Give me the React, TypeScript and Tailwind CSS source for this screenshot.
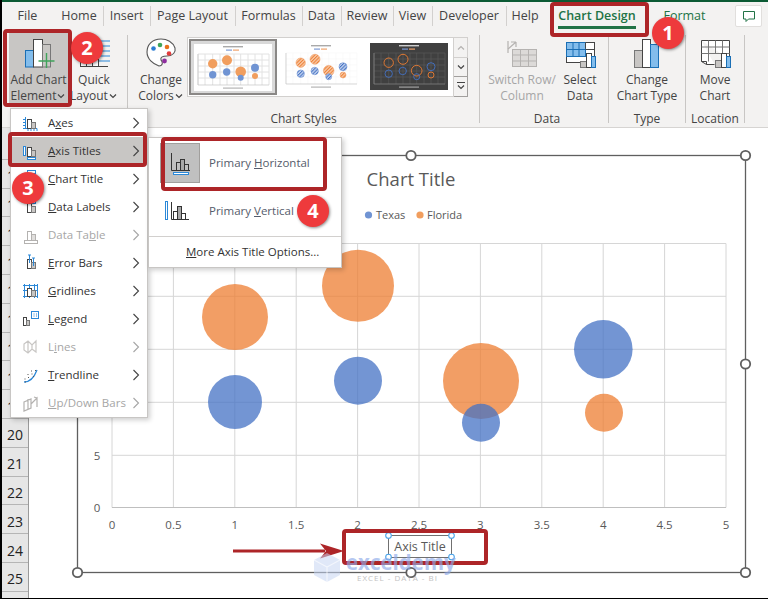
import React from "react";

const RED = "#ad2528";

const tabs = [
  { label: "File", cls: "w-[19px] mr-[25px]" },
  { label: "Home", cls: "w-[34px]", sep: true },
  { label: "Insert", cls: "w-[33px]", sep: true },
  { label: "Page Layout", cls: "w-[71px]", sep: true },
  { label: "Formulas", cls: "w-[53px]", sep: true },
  { label: "Data", cls: "w-[25px]", sep: true },
  { label: "Review", cls: "w-[38px]", sep: true },
  { label: "View", cls: "w-[25px]", sep: true },
  { label: "Developer", cls: "w-[60px]", sep: true },
  { label: "Help", cls: "w-[24px]" },
];

const bubbles = [
  { cx: 235, cy: 317, r: 33, c: "#ed7d31" },
  { cx: 358, cy: 285.7, r: 36, c: "#ed7d31" },
  { cx: 481, cy: 381, r: 38, c: "#ed7d31" },
  { cx: 604, cy: 412.7, r: 19, c: "#ed7d31" },
  { cx: 235, cy: 402, r: 27, c: "#4472c4" },
  { cx: 358, cy: 380.7, r: 24, c: "#4472c4" },
  { cx: 481, cy: 422.7, r: 19, c: "#4472c4" },
  { cx: 603.3, cy: 349.3, r: 29.3, c: "#4472c4" },
];

const thumbBubbles = [
  { x: 18.7, y: 19.7, r: 4.7, orange: true },
  { x: 33, y: 16.3, r: 5, orange: true },
  { x: 46.7, y: 27.7, r: 5.3, orange: true },
  { x: 61, y: 32, r: 3, orange: true },
  { x: 18.7, y: 30.7, r: 3.7 },
  { x: 32.7, y: 28, r: 3.7 },
  { x: 46.7, y: 33.7, r: 3 },
  { x: 61, y: 23.7, r: 4 },
];

const xGrid = [112, 173.4, 234.8, 296.2, 357.6, 419, 480.4, 541.8, 603.2, 664.6, 726];
const yGrid = [243.5, 296.3, 349.3, 402.3, 455.3];
const xLabels = ["0", "0.5", "1", "1.5", "2", "2.5", "3", "3.5", "4", "4.5", "5"];
const rows = [10, 11, 12, 13, 14, 15, 16, 17, 18, 19, 20, 21, 22, 23, 24, 25];

function Chevron({ dir = "down", color = "#444" }: { dir?: "down" | "up"; color?: string }) {
  return (
    <svg width="10" height="8" viewBox="0 0 10 8" className="inline-block">
      <path d={dir === "down" ? "M2 2.5 5 5.5 8 2.5" : "M2 5.5 5 2.5 8 5.5"} fill="none" stroke={color} strokeWidth="1.2" />
    </svg>
  );
}

function Thumb({ kind }: { kind: "solid" | "hatch" | "dark" }) {
  const dark = kind === "dark";
  const grid = dark ? "#5a5a5a" : kind === "solid" ? "#e2e2e2" : "#f6f6f6";
  return (
    <svg width="78" height="47" viewBox="0 0 78 47" className="block">
      <defs>
        <pattern id="hatchO" width="2.4" height="2.4" patternUnits="userSpaceOnUse" patternTransform="rotate(45)">
          <rect width="2.4" height="2.4" fill="#f8c9a6" />
          <rect width="1" height="2.4" fill="#ed7d31" />
        </pattern>
        <pattern id="hatchB" width="2.4" height="2.4" patternUnits="userSpaceOnUse" patternTransform="rotate(45)">
          <rect width="2.4" height="2.4" fill="#c3d2ee" />
          <rect width="1" height="2.4" fill="#4472c4" />
        </pattern>
      </defs>
      <rect width="78" height="47" fill={dark ? "#404040" : "#fff"} />
      {[4, 11, 18.7, 26, 33, 40, 46.7, 54, 61, 68, 75].map((x) => (
        <line key={x} x1={x} x2={x} y1="10" y2="41" stroke={grid} strokeWidth={kind === "solid" ? 1 : 0.6} />
      ))}
      {[10, 16, 22, 28, 34].map((y) => (
        <line key={y} x1="4" x2="75" y1={y} y2={y} stroke={grid} strokeWidth={kind === "solid" ? 1 : 0.6} />
      ))}
      <path d="M4 10v31h71" fill="none" stroke={dark ? "#8a8a8a" : "#c4c4c4"} strokeWidth="0.7" />
      <rect x="29" y="2" width="20" height="1.4" fill={dark ? "#cfcfcf" : "#a9a9a9"} />
      <rect x="32" y="5.5" width="6" height="1.2" fill="#7e9bd4" />
      <rect x="39" y="5.5" width="6" height="1.2" fill="#f0a36d" />
      {thumbBubbles.map((b, i) =>
        kind === "solid" ? (
          <circle key={i} cx={b.x} cy={b.y} r={b.r} fill={b.orange ? "#f19e5e" : "#7094d3"} />
        ) : kind === "hatch" ? (
          <circle key={i} cx={b.x} cy={b.y} r={b.r} fill={b.orange ? "url(#hatchO)" : "url(#hatchB)"} stroke={b.orange ? "#f0a36d" : "#7094d3"} strokeWidth="0.6" />
        ) : (
          <circle key={i} cx={b.x} cy={b.y} r={b.r} fill="none" stroke={b.orange ? "#ed7d31" : "#4472c4"} strokeWidth="0.9" />
        ),
      )}
      <rect x="29" y="43.5" width="20" height="1.2" fill={dark ? "#a0a0a0" : "#b5b5b5"} />
    </svg>
  );
}

/* ribbon icons, all in a 32x30 box */
function AddChartIcon() {
  return (
    <svg width="32" height="30" viewBox="0 0 32 30">
      <rect x="2.5" y="12.5" width="8" height="16.5" fill="#83bdec" stroke="#1a6fb5" />
      <rect x="10.5" y="1.5" width="9" height="27.5" fill="#fff" stroke="#444" />
      <rect x="19.5" y="6.5" width="8" height="22.5" fill="#c8c6c4" stroke="#777" />
      <path d="M23.5 15v16M15.5 23h16" stroke="#3fa45b" strokeWidth="1.4" />
    </svg>
  );
}

function QuickLayoutIcon() {
  return (
    <svg width="32" height="30" viewBox="0 0 32 30">
      <path d="M18 3h14M18 8h14M18 13h14M18 18h14M18 23h14" stroke="#2b88d8" strokeWidth="1" />
      <path d="M2 28.5h28" stroke="#444" />
      <rect x="2.5" y="21.5" width="6" height="7" fill="#fff" stroke="#444" />
      <rect x="8.5" y="21.5" width="6" height="7" fill="#fff" stroke="#444" />
      <rect x="14.5" y="21.5" width="6" height="7" fill="#fff" stroke="#444" />
    </svg>
  );
}

function PaletteIcon() {
  return (
    <svg width="32" height="30" viewBox="0 0 32 30">
      <path d="M16 1C7 1 2 7 2 14c0 7 6 12 12 14 4 0 4-4 2-6-1-3 2-4 6-4 6 0 9-4 8-8-2-6-8-9-14-9Z" fill="#fff" stroke="#555" strokeWidth="1.1" />
      <circle cx="8.5" cy="10.5" r="2.3" fill="#2b7cd3" />
      <circle cx="15" cy="7" r="2.3" fill="#3fa45b" />
      <circle cx="22" cy="9" r="2.3" fill="#e8711b" />
      <circle cx="24" cy="15.5" r="2.3" fill="#e23b3b" />
      <circle cx="19.5" cy="23" r="2.4" fill="#8e2f9e" />
    </svg>
  );
}

function SwitchIcon() {
  return (
    <svg width="32" height="30" viewBox="0 0 32 30">
      <g stroke="#b5b3b1" fill="none">
        <rect x="6.5" y="11.5" width="24" height="17" fill="#dcdad8" />
        <path d="M6.5 17h24M6.5 23h24M14.5 11.5v17M22.5 11.5v17" />
        <path d="M2 11 10 4M10 4H5M10 4v5" strokeWidth="1.2" />
        <path d="M2 3v12" strokeWidth="1.2" />
      </g>
    </svg>
  );
}

function SelectDataIcon() {
  return (
    <svg width="32" height="30" viewBox="0 0 32 30">
      <rect x="2.5" y="4.5" width="28" height="20" fill="#fff" stroke="#444" />
      <rect x="2.5" y="4.5" width="19" height="14" fill="#83bdec" stroke="#1a6fb5" />
      <path d="M2.5 11.5h19M9 4.5v14M15 4.5v14" stroke="#1a6fb5" />
      <path d="M21.5 4.5v6M21.5 11.5h9" stroke="#444" />
      <rect x="16.5" y="23.5" width="6" height="6" fill="#c8c6c4" stroke="#777" />
      <rect x="22.5" y="15.5" width="5" height="14" fill="#fff" stroke="#444" />
      <rect x="27.5" y="18.5" width="4" height="11" fill="#83bdec" stroke="#1a6fb5" />
    </svg>
  );
}

function ChartTypeIcon() {
  return (
    <svg width="32" height="30" viewBox="0 0 32 30">
      <rect x="3.5" y="12.5" width="8" height="17" fill="#c8c6c4" stroke="#777" />
      <rect x="11.5" y="1.5" width="8" height="28" fill="#fff" stroke="#444" />
      <rect x="19.5" y="6.5" width="8" height="23" fill="#83bdec" stroke="#1a6fb5" />
    </svg>
  );
}

function MoveChartIcon() {
  return (
    <svg width="32" height="30" viewBox="0 0 32 30">
      <path d="M2.5 2.5h28v19M2.5 2.5v21l5 3h8" fill="#fff" stroke="#444" />
      <path d="M2.5 9h28M2.5 15.5h28M9.5 2.5v21M16.5 2.5v13M23.5 2.5v13" stroke="#777" />
      <path d="M2.5 23.5h5v3" fill="none" stroke="#444" />
      <rect x="16.5" y="22.5" width="6" height="7" fill="#c8c6c4" stroke="#777" />
      <rect x="22.5" y="15.5" width="5" height="14" fill="#fff" stroke="#444" />
      <rect x="27.5" y="18.5" width="4" height="11" fill="#83bdec" stroke="#1a6fb5" />
    </svg>
  );
}

function RibbonButton({
  icon,
  lines,
  arrow,
  className = "",
  muted,
}: {
  icon: React.ReactNode;
  lines: [string, string];
  arrow?: boolean;
  className?: string;
  muted?: boolean;
}) {
  return (
    <div className={`flex h-[72px] shrink-0 flex-col items-center pt-[5px] text-[12px] leading-[16px] ${muted ? "text-[#a6a6a6]" : "text-[#444]"} ${className}`}>
      <div className="h-[30px]">{icon}</div>
      <span className="mt-[4px] whitespace-nowrap">{lines[0]}</span>
      <span className="flex items-center whitespace-nowrap">
        {lines[1]}
        {arrow && <Chevron />}
      </span>
    </div>
  );
}

function Group({ label, className, children }: { label?: string; className: string; children: React.ReactNode }) {
  return (
    <div className={`flex h-full shrink-0 flex-col ${className}`}>
      <div className="flex flex-1 pt-[3px]">{children}</div>
      {label && <div className="h-[16px] text-center text-[12px] leading-[16px] text-[#444]">{label}</div>}
    </div>
  );
}

const RibbonSep = () => <div className="my-[5px] h-[88px] w-px shrink-0 bg-[#c8c6c4]" />;

function MenuBars({ light }: { light?: boolean }) {
  const s = light ? "#b4b2b0" : "#444";
  return (
    <>
      <rect x="7.5" y="6.5" width="4" height="9" fill="#fff" stroke={s} />
      <rect x="11.5" y="9.5" width="4" height="6" fill={light ? "#e1dfdd" : "#c8c6c4"} stroke={light ? "#b4b2b0" : "#777"} />
    </>
  );
}

const B = "#2b88d8";
const menuIcons: Record<string, React.ReactNode> = {
  Axes: (
    <>
      <path d="M5.5 4v12M3 6.5h2.5M3 9.5h2.5M3 12.5h2.5M3 15.5h14M8 15.5V18M11 15.5V18M14 15.5V18M17 15.5V18" stroke={B} fill="none" />
      <MenuBars />
    </>
  ),
  "Axis Titles": (
    <>
      <rect x="3.5" y="5.5" width="2" height="9" fill="#fff" stroke={B} />
      <MenuBars />
      <rect x="7.5" y="16.5" width="8" height="2" fill="#fff" stroke={B} />
    </>
  ),
  "Chart Title": (
    <>
      <rect x="7.5" y="1.5" width="8" height="3" fill="#fff" stroke={B} />
      <MenuBars />
    </>
  ),
  "Data Labels": (
    <>
      <rect x="11.5" y="3.5" width="4" height="3" fill="#fff" stroke={B} />
      <MenuBars />
    </>
  ),
  "Data Table": (
    <>
      <MenuBars light />
      <rect x="4.5" y="15.5" width="13" height="3" fill="#fff" stroke="#b4b2b0" />
    </>
  ),
  "Error Bars": (
    <>
      <MenuBars />
      <path d="M9.5 2v8M8 2h3M13.5 5v8M12 5h3" stroke={B} />
    </>
  ),
  Gridlines: (
    <>
      <path d="M3 4.5h15M3 9.5h15M3 15.5h15M4.5 3v14M9.5 3v14M14.5 3v14M17.5 3v14" stroke={B} />
      <rect x="7.5" y="7.5" width="4" height="8" fill="#fff" stroke="#444" />
      <rect x="11.5" y="9.5" width="4" height="6" fill="#c8c6c4" stroke="#777" />
    </>
  ),
  Legend: (
    <>
      <rect x="3.5" y="8.5" width="3" height="8" fill="#fff" stroke="#444" />
      <rect x="6.5" y="11.5" width="3" height="5" fill="#c8c6c4" stroke="#777" />
      <rect x="11.5" y="2.5" width="7" height="7" fill="#fff" stroke={B} />
      <path d="M13.5 5h1M13.5 7h1M16 5h1M16 7h1" stroke={B} />
    </>
  ),
  Lines: (
    <path d="M4 7 8 4l4 4 4-4v11l-4-3-4 4-4-3V7ZM8 4v12M12 8v4" fill="none" stroke="#c8c6c4" strokeWidth="1.2" />
  ),
  Trendline: (
    <>
      <path d="M4 17c6 0 10-4 13-12" fill="none" stroke={B} strokeWidth="1.3" />
      <path d="M4.5 14h1M8 12.5h1M7.5 9.5h1M11.5 9h1M11 6h1M13 11.5h1M15 5.5h1M5 17h1" stroke="#555" strokeWidth="1.2" />
    </>
  ),
  "Up/Down Bars": (
    <path d="M4 9 11 6v9l-7 3V9ZM11 11l6-6v9M14 4l3 1M8 6v11" fill="none" stroke="#b4b2b0" strokeWidth="1.2" />
  ),
};

const menuItems: { name: string; before: string; key: string; after: string; muted?: boolean; active?: boolean }[] = [
  { name: "Axes", before: "A", key: "x", after: "es" },
  { name: "Axis Titles", before: "", key: "A", after: "xis Titles", active: true },
  { name: "Chart Title", before: "", key: "C", after: "hart Title" },
  { name: "Data Labels", before: "", key: "D", after: "ata Labels" },
  { name: "Data Table", before: "Data Ta", key: "b", after: "le", muted: true },
  { name: "Error Bars", before: "", key: "E", after: "rror Bars" },
  { name: "Gridlines", before: "", key: "G", after: "ridlines" },
  { name: "Legend", before: "", key: "L", after: "egend" },
  { name: "Lines", before: "L", key: "i", after: "nes", muted: true },
  { name: "Trendline", before: "", key: "T", after: "rendline" },
  { name: "Up/Down Bars", before: "", key: "U", after: "p/Down Bars", muted: true },
];

function Badge({ n, className }: { n: number; className: string }) {
  return (
    <div className={`absolute flex h-[32px] w-[32px] items-center justify-center rounded-full bg-[#ee3a3c] text-[20px] font-bold text-white shadow-[1px_1px_3px_rgba(0,0,0,0.45)] ${className}`}>
      {n}
    </div>
  );
}

const Callout = ({ className }: { className: string }) => (
  <div className={`absolute rounded-[4px] border-[4px] border-[#ad2528] ${className}`} />
);

function Handle({ x, y }: { x: number; y: number }) {
  return <circle cx={x} cy={y} r="4.7" fill="#fff" stroke="#5f5f5f" strokeWidth="1.8" />;
}

function ChartCanvas() {
  return (
    <svg width="739" height="470" viewBox="29 128 739 470" className="block" fontFamily="Open Sans, sans-serif">
      <rect x="77.5" y="155.5" width="668" height="417" fill="#fff" stroke="#5f5f5f" strokeWidth="1.3" />
      {xGrid.map((x) => (
        <line key={x} x1={x} x2={x} y1={243.5} y2={507.5} stroke="#d6d6d6" strokeWidth="1" />
      ))}
      {yGrid.map((y) => (
        <line key={y} x1={112} x2={726} y1={y} y2={y} stroke="#d6d6d6" strokeWidth="1" />
      ))}
      <path d="M112 507.5h614" stroke="#bfbfbf" strokeWidth="1" />
      {bubbles.map((b) => (
        <circle key={`${b.cx}-${b.cy}`} cx={b.cx} cy={b.cy} r={b.r} fill={b.c} fillOpacity="0.75" />
      ))}
      <text x="411" y="186" textAnchor="middle" fontSize="18.5" fill="#595959">Chart Title</text>
      <circle cx="368.5" cy="215" r="3.6" fill="#7094d3" />
      <text x="376" y="219" fontSize="11" fill="#595959">Texas</text>
      <circle cx="420" cy="215" r="3.6" fill="#f19e5e" />
      <text x="427" y="219" fontSize="11" fill="#595959">Florida</text>
      <text x="97" y="459.5" textAnchor="middle" fontSize="11.5" fill="#595959">5</text>
      <text x="97" y="512" textAnchor="middle" fontSize="11.5" fill="#595959">0</text>
      {xLabels.map((l, i) => (
        <text key={l} x={xGrid[i]} y={529} textAnchor="middle" fontSize="11.5" fill="#595959">{l}</text>
      ))}
      <Handle x={411} y={155.5} />
      <Handle x={745.5} y={155.5} />
      <Handle x={745.5} y={364} />
      <Handle x={77.5} y={572.5} />
      <Handle x={411} y={572.5} />
      <Handle x={745.5} y={572.5} />
      {/* arrow pointing at the axis title */}
      <path d="M233 549.5h92v3h-92Z" fill={RED} />
      <path d="M320 543.5 344 551l-24 7.5 6-7.5Z" fill={RED} />
      {/* axis title box */}
      <rect x="388.5" y="535.5" width="63" height="22" fill="#fff" fillOpacity="0.7" stroke="#707070" />
      <text x="420" y="550.5" textAnchor="middle" fontSize="12.5" fill="#595959">Axis Title</text>
      {[[388.5, 535.5], [451.5, 535.5], [388.5, 557], [451.5, 557]].map(([x, y]) => (
        <circle key={`${x}-${y}`} cx={x} cy={y} r="2.8" fill="#fff" stroke="#4aa3e8" strokeWidth="1.1" />
      ))}
    </svg>
  );
}

export default function App() {
  return (
    <div className="relative flex h-[599px] w-[768px] overflow-hidden bg-black font-['Open_Sans',sans-serif]">
      <div className="w-[2px] shrink-0 bg-black" />
      <div className="flex h-[598px] min-w-0 flex-1 flex-col bg-white">
        <div className="h-[2px] shrink-0 bg-[#0b5a34]" />

        {/* TABS */}
        <div className="flex h-[28px] shrink-0 items-center bg-[#f3f2f1] pl-[16px] text-[12.5px] text-[#444]">
          {tabs.map((t) => (
            <React.Fragment key={t.label}>
              <span className={`flex justify-center whitespace-nowrap ${t.cls}`}>{t.label}</span>
              {t.sep && <span className="mx-[6.5px] h-[20px] w-px bg-[#d2d0ce]" />}
            </React.Fragment>
          ))}
          <span className="relative ml-[21px] flex h-full w-[78px] justify-center whitespace-nowrap pt-[5px] font-semibold text-[#217346]">
            Chart Design
            <span className="absolute bottom-[1px] left-0 h-[3px] w-full bg-[#217346]" />
          </span>
          <span className="ml-[28px] flex w-[41px] justify-center text-[#217346]">Format</span>
          <span className="ml-[30px] flex h-[22px] w-[27px] items-center justify-center rounded-[2px] border border-[#e1dfdd] bg-white">
            <svg width="14" height="13" viewBox="0 0 14 13">
              <path d="M1.5 1.5h11v7.5H6.5l-2.5 2.5V9H1.5Z" fill="none" stroke="#217346" />
            </svg>
          </span>
        </div>

        {/* RIBBON */}
        <div className="flex h-[98px] shrink-0 border-b border-[#d6d4d2] bg-[#f3f2f1]">
          <Group className="w-[125px] pl-[7px]">
            <RibbonButton icon={<AddChartIcon />} lines={["Add Chart", "Element"]} arrow className="w-[59px] bg-[#c8c6c4]" />
            <RibbonButton icon={<QuickLayoutIcon />} lines={["Quick", "Layout"]} arrow className="ml-[4px] w-[44px]" />
          </Group>
          <RibbonSep />
          <Group label="Chart Styles" className="w-[351px]">
            <RibbonButton icon={<PaletteIcon />} lines={["Change", "Colors"]} arrow className="ml-[7px] w-[52px]" />
            <div className="mt-[4px] flex h-[60px]">
              <div className="flex w-[267px] border border-[#d2d0ce] bg-white">
                <div className="m-px flex h-[56px] w-[88px] items-center justify-center border-2 border-[#8a8886] bg-[#d9d9d9]">
                  <Thumb kind="solid" />
                </div>
                <div className="ml-[4px] mt-[5px]">
                  <Thumb kind="hatch" />
                </div>
                <div className="ml-[10px] mt-[5px]">
                  <Thumb kind="dark" />
                </div>
              </div>
              <div className="flex w-[14px] flex-col">
                <div className="flex h-[21px] items-center justify-center border border-l-0 border-[#d2d0ce]">
                  <Chevron dir="up" color="#b4b2b0" />
                </div>
                <div className="flex h-[19px] items-center justify-center border border-l-0 border-t-0 border-[#a19f9d]">
                  <Chevron />
                </div>
                <div className="flex h-[20px] flex-col items-center justify-center border border-l-0 border-t-0 border-[#a19f9d]">
                  <span className="h-px w-[8px] bg-[#444]" />
                  <Chevron />
                </div>
              </div>
            </div>
          </Group>
          <RibbonSep />
          <Group label="Data" className="w-[128px] pl-[6px]">
            <RibbonButton icon={<SwitchIcon />} lines={["Switch Row/", "Column"]} muted className="w-[72px]" />
            <RibbonButton icon={<SelectDataIcon />} lines={["Select", "Data"]} className="w-[44px]" />
          </Group>
          <RibbonSep />
          <Group label="Type" className="w-[76px]">
            <RibbonButton icon={<ChartTypeIcon />} lines={["Change", "Chart Type"]} className="w-full" />
          </Group>
          <RibbonSep />
          <Group label="Location" className="w-[58px]">
            <RibbonButton icon={<MoveChartIcon />} lines={["Move", "Chart"]} className="w-full" />
          </Group>
          <RibbonSep />
        </div>

        {/* SHEET */}
        <div className="flex min-h-0 flex-1">
          <div className="flex w-[27px] shrink-0 flex-col overflow-hidden border-r border-[#9a9a9a] bg-[#e6e6e6] pt-[3px]">
            {rows.map((r) => (
              <div key={r} className="flex h-[28.8px] shrink-0 items-center justify-center border-b border-[#b5b5b5] pt-[4px] text-[14px] text-[#222]">
                {r}
              </div>
            ))}
          </div>
          <ChartCanvas />
        </div>
      </div>

      {/* ADD CHART ELEMENT MENU */}
      <div className="absolute left-[10px] top-[108px] h-[310px] w-[138px] border border-[#c8c6c4] bg-white shadow-[2px_2px_5px_rgba(0,0,0,0.2)]">
        {menuItems.map((m) => (
          <div key={m.name} className={`flex h-[28px] items-center text-[11.5px] ${m.muted ? "text-[#a6a6a6]" : "text-[#333]"} ${m.active ? "bg-[#c8c6c4]" : ""}`}>
            <svg width="20" height="20" viewBox="0 0 20 20" className="ml-[9px] shrink-0">
              {menuIcons[m.name]}
            </svg>
            <span className="ml-[8px] flex-1 whitespace-nowrap">
              {m.before}
              <u>{m.key}</u>
              {m.after}
            </span>
            <svg width="8" height="12" viewBox="0 0 8 12" className="mr-[7px] shrink-0">
              <path d="M1.5 1 6.5 6l-5 5" fill="none" stroke={m.muted ? "#a6a6a6" : "#444"} strokeWidth="1.1" />
            </svg>
          </div>
        ))}
      </div>

      {/* AXIS TITLES SUBMENU */}
      <div className="absolute left-[148px] top-[137px] h-[131px] w-[194px] border border-[#c8c6c4] bg-white text-[11.5px] text-[#555c6b] shadow-[2px_2px_5px_rgba(0,0,0,0.2)]">
        <div className="ml-[11px] mt-[5px] flex h-[40px] items-center">
          <div className="flex h-[40px] w-[40px] items-center justify-center border border-[#a19f9d] bg-[#c0c0c0]">
            <svg width="24" height="24" viewBox="0 0 24 24">
              <path d="M3.5 2v17.5H22" fill="none" stroke="#333" />
              <rect x="8.5" y="11.5" width="4" height="8" fill="none" stroke="#333" />
              <rect x="12.5" y="8.5" width="4" height="11" fill="#a8a8a8" stroke="#333" />
              <rect x="16.5" y="13.5" width="4" height="6" fill="none" stroke="#333" />
              <rect x="5.5" y="21.5" width="15" height="2" fill="#fff" stroke={B} />
            </svg>
          </div>
          <span className="ml-[9px]">
            Primary <u>H</u>orizontal
          </span>
        </div>
        <div className="ml-[15px] mt-[8px] flex h-[40px] items-center">
          <svg width="26" height="24" viewBox="0 0 26 24" className="shrink-0">
            <rect x="1.5" y="2.5" width="2" height="18" fill="#fff" stroke={B} />
            <path d="M7.5 3v17.5H25" fill="none" stroke="#333" />
            <rect x="9.5" y="12.5" width="4" height="8" fill="none" stroke="#333" />
            <rect x="13.5" y="7.5" width="4" height="13" fill="#a8a8a8" stroke="#333" />
            <rect x="17.5" y="14.5" width="4" height="6" fill="none" stroke="#333" />
          </svg>
          <span className="ml-[19px]">
            Primary <u>V</u>ertical
          </span>
        </div>
        <div className="mt-[5px] h-px bg-[#d2d0ce]" />
        <div className="ml-[37px] mt-[6px] text-[#333]">
          <u>M</u>ore Axis Title Options...
        </div>
      </div>

      {/* ANNOTATIONS */}
      <Callout className="left-[550px] top-[2px] h-[35px] w-[99px]" />
      <Callout className="left-[3px] top-[29px] h-[78px] w-[69px]" />
      <Callout className="left-[8px] top-[132px] h-[35px] w-[139px]" />
      <Callout className="left-[161px] top-[137px] h-[54px] w-[166px]" />
      <Callout className="left-[342px] top-[529px] h-[36px] w-[146px]" />
      <Badge n={1} className="left-[652px] top-[17px]" />
      <Badge n={2} className="left-[71px] top-[32px]" />
      <Badge n={3} className="left-[12px] top-[172px]" />
      <Badge n={4} className="left-[297px] top-[195px]" />

      {/* WATERMARK, over everything like the stamp on the picture */}
      <svg width="156" height="46" viewBox="310 545 156 46" className="absolute left-[310px] top-[545px]" fontFamily="Open Sans, sans-serif">
        <path d="M327 553 340 560v15l-13 7-13-7v-15Z" fill="#c7d5f3" opacity="0.55" />
        <path d="M327 567 340 560M327 567v15M327 567l-13-7" stroke="#fff" strokeWidth="1.2" fill="none" opacity="0.6" />
        <text x="346" y="570" fontSize="20.5" fontWeight="700" fill="#8fabea" opacity="0.65">exceldemy</text>
        <text x="357" y="581" fontSize="8" letterSpacing="1" fill="#a8a8a8" opacity="0.7">EXCEL - DATA - BI</text>
      </svg>
    </div>
  );
}
